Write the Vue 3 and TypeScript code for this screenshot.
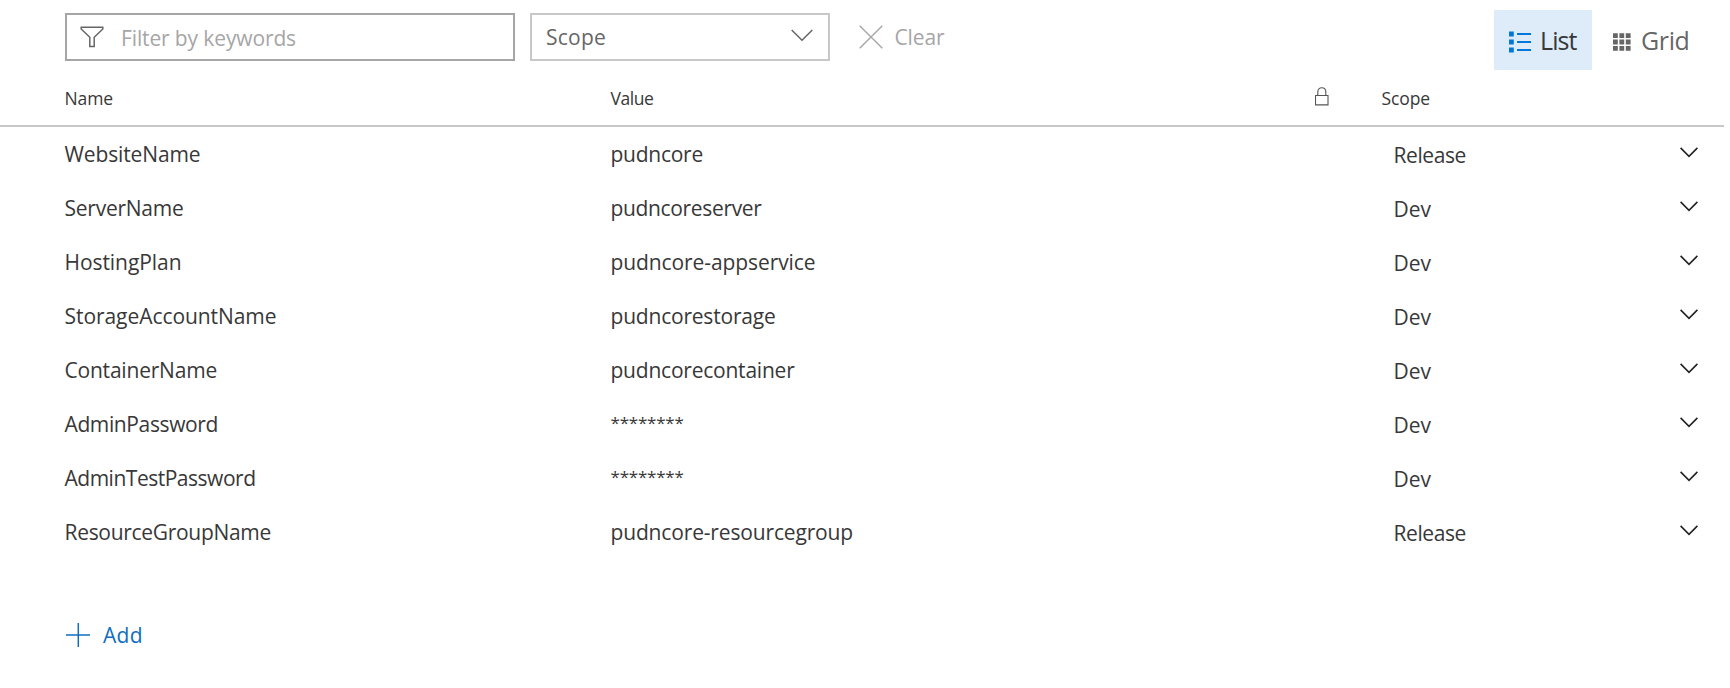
<script setup lang="ts">
import type { Directive } from 'vue'

interface Variable {
  name: string
  nameWidth: number
  value: string
  valueWidth: number
  scope: string
  secret?: boolean
}

const variables: Variable[] = [
  { name: 'WebsiteName', nameWidth: 136, value: 'pudncore', valueWidth: 92.5, scope: 'Release' },
  { name: 'ServerName', nameWidth: 119, value: 'pudncoreserver', valueWidth: 151, scope: 'Dev' },
  { name: 'HostingPlan', nameWidth: 117, value: 'pudncore-appservice', valueWidth: 205, scope: 'Dev' },
  { name: 'StorageAccountName', nameWidth: 212, value: 'pudncorestorage', valueWidth: 165, scope: 'Dev' },
  { name: 'ContainerName', nameWidth: 152.5, value: 'pudncorecontainer', valueWidth: 184, scope: 'Dev' },
  { name: 'AdminPassword', nameWidth: 153.5, value: '********', valueWidth: 73, scope: 'Dev', secret: true },
  { name: 'AdminTestPassword', nameWidth: 191, value: '********', valueWidth: 73, scope: 'Dev', secret: true },
  { name: 'ResourceGroupName', nameWidth: 206.5, value: 'pudncore-resourcegroup', valueWidth: 242.5, scope: 'Release' },
]

const scopeWidths: Record<string, number> = { Release: 72.5, Dev: 37.5 }

// Tracks a label in or out so that it takes the given width.
const vFit: Directive<HTMLElement, number> = {
  mounted(el, { value }) {
    const count = (el.textContent ?? '').length
    if (!count) return
    const natural = el.getBoundingClientRect().width
    el.style.letterSpacing = `${(value - natural) / count}px`
  },
}
</script>

<template>
  <main class="page">
    <div class="toolbar">
      <div class="filter">
        <svg class="funnel" width="24" height="22" viewBox="0 0 24 22">
          <path d="M1.2 1.2H22.8V3L14.2 11.3V20.4H9.8V11.3L1.2 3Z" />
        </svg>
        <span v-fit="175" class="label">Filter by keywords</span>
      </div>
      <div class="select">
        <span v-fit="60" class="label">Scope</span>
        <svg width="22" height="13" viewBox="0 0 22 13"><path d="M.7 1L11 11.3L21.3 1" /></svg>
      </div>
      <div class="clear">
        <svg width="24" height="24" viewBox="0 0 24 24"><path d="M.7.7L23.3 23.3M23.3.7L.7 23.3" /></svg>
        <span v-fit="50" class="label">Clear</span>
      </div>
      <div class="views">
        <div class="view active">
          <svg width="22" height="22" viewBox="0 0 22 22">
            <path class="squares" d="M0 .6h4.8v4.9H0zM0 8.6h4.8v4.9H0zM0 16.6h4.8v4.9H0z" />
            <path class="lines" d="M8 3H22M8 11H22M8 19H22" />
          </svg>
          <span v-fit="36.5" class="label">List</span>
        </div>
        <div class="view">
          <svg width="18" height="18" viewBox="0 0 18 18">
            <path d="M0 .2h4.8V5H0zM6.4.2h4.8V5H6.4zM12.8.2h4.8V5h-4.8zM0 6.6h4.8v4.8H0zM6.4 6.6h4.8v4.8H6.4zM12.8 6.6h4.8v4.8h-4.8zM0 13h4.8v4.8H0zM6.4 13h4.8v4.8H6.4zM12.8 13h4.8v4.8h-4.8z" />
          </svg>
          <span v-fit="48.5" class="label">Grid</span>
        </div>
      </div>
    </div>

    <div class="head columns">
      <div><span v-fit="48.5" class="label">Name</span></div>
      <div><span v-fit="43" class="label">Value</span></div>
      <svg class="lock" width="15" height="19" viewBox="0 0 15 19">
        <path d="M.5 8.5H13V17.9H.5ZM2.8 8.5V5C2.8 2.2 4.5.7 6.8.7S10.8 2.2 10.8 5V8.5" />
      </svg>
      <div><span v-fit="48.5" class="label">Scope</span></div>
    </div>

    <div class="rows">
      <div v-for="item in variables" :key="item.name" class="row columns">
        <div><span v-fit="item.nameWidth" class="label">{{ item.name }}</span></div>
        <div><span v-fit="item.valueWidth" class="label" :class="{ secret: item.secret }">{{ item.value }}</span></div>
        <div></div>
        <div class="scope"><span v-fit="scopeWidths[item.scope]" class="label">{{ item.scope }}</span></div>
        <svg class="chevron" width="18" height="11" viewBox="0 0 18 11"><path d="M.6.9L9 9.3L17.4.9" /></svg>
      </div>
    </div>

    <div class="add">
      <svg width="24" height="24" viewBox="0 0 24 24"><path d="M0 12H24M12.3 0V24" /></svg>
      <span v-fit="40" class="label">Add</span>
    </div>
  </main>
</template>

<style>
body {
  margin: 0;
  background: #fff;
}
</style>

<style scoped>
.page {
  width: 1730px;
  height: 688px;
  overflow: hidden;
  background: #fff;
  color: #383838;
  font: 21px/28px "Open Sans", "Noto Sans", sans-serif;
}
svg {
  display: block;
  flex: none;
  fill: none;
}
.label {
  display: inline-block;
  vertical-align: top;
  white-space: nowrap;
}
.toolbar {
  display: flex;
  align-items: flex-start;
  height: 73px;
  box-sizing: border-box;
  padding: 10px 30px 0 65px;
}
.filter,
.select {
  display: flex;
  align-items: center;
  box-sizing: border-box;
  height: 48px;
  margin-top: 3px;
  border: 2px solid #a6a6a6;
}
.filter {
  width: 450px;
  padding: 2px 0 0 14px;
  color: #a6a6a6;
}
.funnel {
  margin: 0 17px 2px -1px;
  stroke: #666;
  stroke-width: 1.5;
}
.select {
  justify-content: space-between;
  width: 300px;
  margin-left: 15px;
  padding: 0 15px 0 14px;
  border-color: #c8c8c8;
  color: #666;
}
.select svg {
  margin-bottom: 3px;
  stroke: #666;
  stroke-width: 1.5;
}
.clear {
  display: flex;
  align-items: center;
  gap: 12px;
  height: 48px;
  margin: 3px 0 0 28.5px;
  color: #a6a6a6;
}
.clear svg {
  stroke: #a6a6a6;
  stroke-width: 1.4;
}
.views {
  display: flex;
  margin-left: auto;
}
.view {
  display: flex;
  align-items: center;
  box-sizing: border-box;
  height: 60px;
  padding: 4px 10.5px 0 21px;
  color: #666;
  font-size: 25px;
}
.view.active {
  width: 98px;
  padding-left: 15px;
  background: #deecf9;
  color: #383838;
}
.view .label {
  margin: -4px 0 0 9px;
}
.view:not(.active) .label {
  margin-left: 10px;
}
.view svg {
  fill: #666;
}
.view .squares {
  fill: #0078d7;
}
.view .lines {
  stroke: #0078d7;
  stroke-width: 1.8;
}
.columns {
  display: grid;
  grid-template-columns: 546px 704px 67px 298.5px auto;
  align-items: center;
  justify-content: start;
  padding-left: 64.5px;
}
.head {
  width: 1659.5px;
  height: 52px;
  border-bottom: 2px solid #c8c8c8;
  font-size: 17.5px;
}
.head > div {
  padding-bottom: 2px;
}
.lock {
  margin-bottom: 6px;
  stroke: #555;
  stroke-width: 1.1;
}
.row {
  box-sizing: border-box;
  height: 54px;
}
.secret {
  font-size: 17px;
  line-height: 26px;
}
.scope {
  padding: 2px 0 0 12px;
}
.chevron {
  margin-bottom: 4px;
  stroke: #222;
  stroke-width: 1.6;
}
.add {
  display: flex;
  align-items: center;
  gap: 13px;
  margin: 62px 0 0 66px;
  color: #106ebe;
}
.add svg {
  stroke: #106ebe;
  stroke-width: 1.5;
}
</style>
